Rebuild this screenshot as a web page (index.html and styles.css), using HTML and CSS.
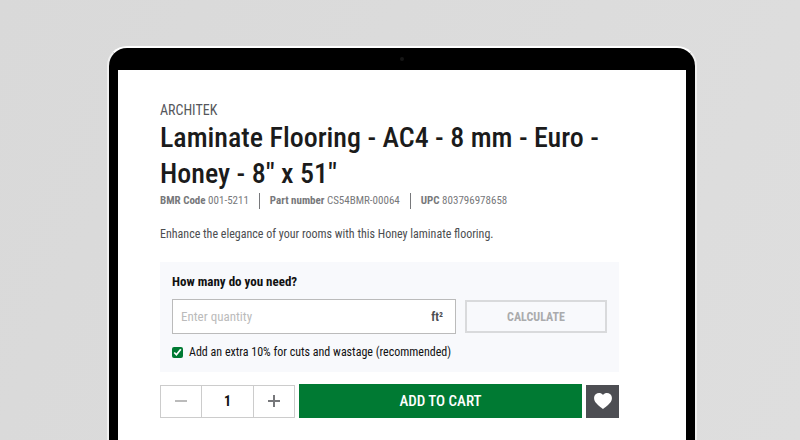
FILE: index.html
```html
<!DOCTYPE html>
<html lang="en">
<head>
<meta charset="utf-8">
<meta name="viewport" content="width=device-width, initial-scale=1">
<title>Laminate Flooring - ARCHITEK</title>
<link rel="stylesheet" href="styles.css">
</head>
<body>
<div class="device">
  <div class="bezel"><span class="camera"></span></div>
  <main class="screen">
    <p class="brand">ARCHITEK</p>
    <h1 class="title">Laminate Flooring - AC4 - 8 mm - Euro - Honey - 8" x 51"</h1>
    <ul class="codes">
      <li><b>BMR Code</b> 001-5211</li>
      <li><b>Part number</b> CS54BMR-00064</li>
      <li><b>UPC</b> 803796978658</li>
    </ul>
    <p class="description">Enhance the elegance of your rooms with this Honey laminate flooring.</p>
    <form class="calculator">
      <label class="question" for="area">How many do you need?</label>
      <div class="calc-row">
        <div class="field">
          <input id="area" class="field-input" type="text" placeholder="Enter quantity">
          <span class="unit">ft²</span>
        </div>
        <button class="calculate" type="button">CALCULATE</button>
      </div>
      <div class="extra">
        <input id="extra" class="check" type="checkbox" checked>
        <label for="extra">Add an extra 10% for cuts and wastage (recommended)</label>
      </div>
    </form>
    <div class="purchase">
      <div class="stepper">
        <button class="step step-minus" type="button" aria-label="Decrease quantity">
          <svg width="12" height="12" viewBox="0 0 12 12"><path d="M0 6h12" stroke="currentColor" stroke-width="2"/></svg>
        </button>
        <input class="count" type="text" value="1" aria-label="Quantity">
        <button class="step" type="button" aria-label="Increase quantity">
          <svg width="12" height="12" viewBox="0 0 12 12"><path d="M0 6h12M6 0v12" stroke="currentColor" stroke-width="2"/></svg>
        </button>
      </div>
      <button class="add" type="button">ADD TO CART</button>
      <button class="wish" type="button" aria-label="Add to wish list">
        <svg width="18" height="16" viewBox="0 0 18 16"><path d="M9 16C7.500 14.800 2.800 11.300 1.100 8.700C-.5 6.200-.2 3 1.700 1.300C4-.6 7.200-.2 9 2C10.800-.2 14-.6 16.300 1.300C18.200 3 18.500 6.200 16.900 8.700C15.200 11.300 10.500 14.800 9 16Z" fill="#fff"/></svg>
      </button>
    </div>
  </main>
</div>
</body>
</html>
```
FILE: styles.css
```css
* {
  box-sizing: border-box;
}

body {
  margin: 0;
  min-height: 100vh;
  padding: 46px 103px 0 107px;
  display: flex;
  background: linear-gradient(115deg, #d9d9d9, #dedede);
  color: #111;
  font-family: "Roboto Condensed", Roboto, "Liberation Sans", sans-serif;
  font-size: 12px;
  line-height: 16px;
}

button,
input {
  margin: 0;
  padding: 0;
  border-radius: 0;
  color: inherit;
  font: inherit;
}

h1,
p,
ul {
  margin: 0;
}

.device {
  flex: 1;
  display: flex;
  flex-direction: column;
  padding: 0 9px;
  border: 2px solid #fff;
  border-width: 2px 2px 0;
  border-color: #fff #f0f0f0;
  border-radius: 20px 20px 0 0;
  background: #000;
}

.bezel {
  height: 22px;
  display: flex;
  align-items: center;
  justify-content: center;
}

.camera {
  width: 4px;
  height: 4px;
  border-radius: 50%;
  background: #161616;
}

.screen {
  flex: 1;
  padding: 32px 67px 22px 42px;
  background: #fff;
}

.brand {
  color: #55565b;
  font-size: 14px;
}

.title {
  margin-top: 2px;
  color: #1b1b1b;
  font-size: 28px;
  font-weight: 500;
  line-height: 36px;
}

.codes {
  display: flex;
  margin-top: 1px;
  padding: 0;
  list-style: none;
  color: #77787b;
  font-size: 11px;
  white-space: nowrap;
}

.codes li + li {
  margin-left: 10px;
  padding-left: 10px;
  border-left: 1px solid #77787b;
}

.description {
  margin: 17px 0 20px;
  color: #4c4d50;
}

.calculator {
  padding: 12px;
  background: #f8f9fc;
}

.question {
  display: block;
  font-size: 13px;
  font-weight: 700;
}

.calc-row {
  display: grid;
  grid-template-columns: 2fr 1fr;
  align-items: center;
  gap: 9px;
  margin: 9px 0 10px;
}

.field {
  display: flex;
  align-items: center;
  height: 35px;
  padding: 0 12px 0 8px;
  border: 1px solid #bbb;
  background: #fff;
}

.field-input {
  flex: 1;
  min-width: 0;
  border: 0;
  outline: 0;
  background: none;
  font-size: 13px;
}

.field-input::placeholder {
  color: #bbb;
}

.unit {
  color: #4c4d50;
  font-weight: 700;
}

.calculate {
  height: 33px;
  border: 2px solid #d9dadc;
  background: none;
  color: #aaabad;
  font-weight: 700;
}

.extra {
  display: flex;
  align-items: center;
  gap: 6px;
}

.check {
  width: 11px;
  height: 11px;
  accent-color: #007a33;
}

.purchase {
  display: flex;
  align-items: center;
  gap: 4px;
  margin-top: 12px;
}

.stepper {
  display: flex;
  width: 135px;
  height: 33px;
  border: 1px solid #ccc;
}

.step {
  flex: 1;
  display: flex;
  align-items: center;
  justify-content: center;
  border: 0;
  background: #fff;
  color: #77787b;
}

.step-minus {
  color: #bbb;
}

.count {
  width: 53px;
  border: 1px solid #ccc;
  border-width: 0 1px;
  font-size: 14px;
  font-weight: 700;
  text-align: center;
}

.add {
  flex: 1;
  height: 34px;
  border: 0;
  background: #007a33;
  color: #fff;
  font-size: 15px;
  font-weight: 500;
}

.wish {
  display: flex;
  align-items: center;
  justify-content: center;
  width: 33px;
  height: 33px;
  border: 0;
  background: #4d4e53;
}
```
